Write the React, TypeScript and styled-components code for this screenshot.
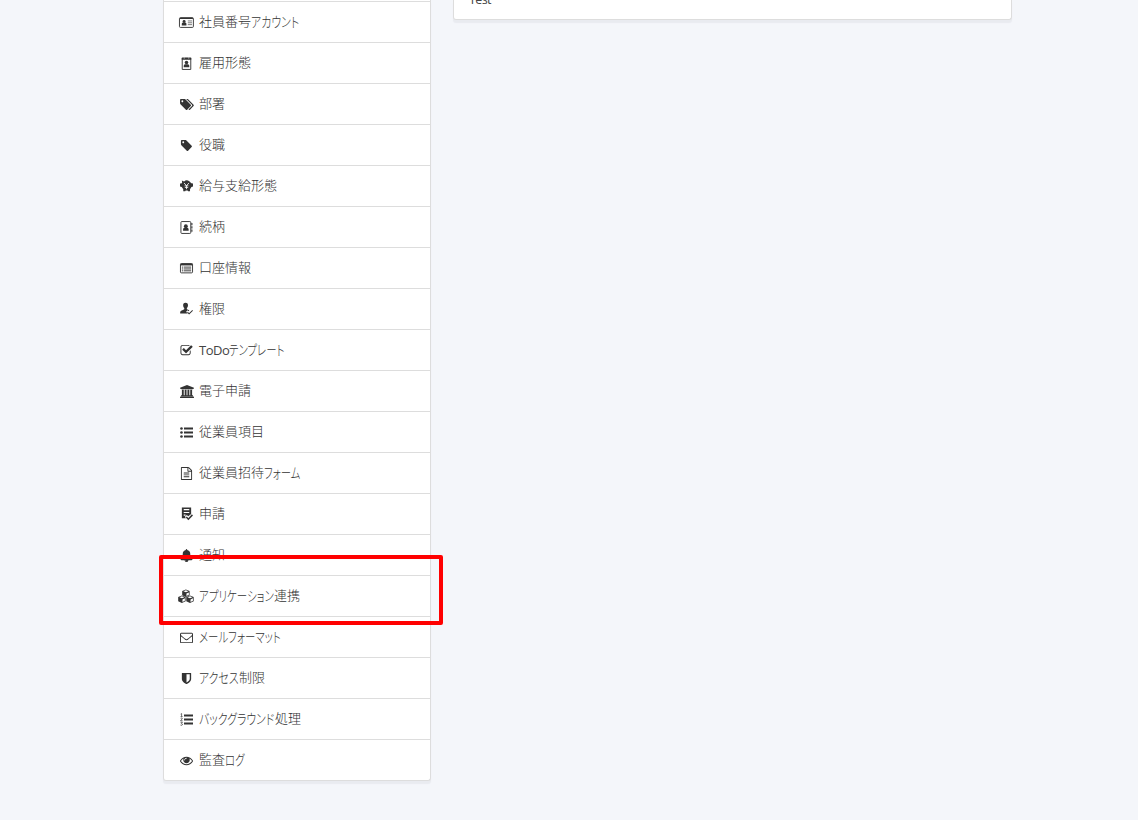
import React from "react";
import styled, { createGlobalStyle } from "styled-components";

const GlobalStyle = createGlobalStyle`
  * { box-sizing: border-box; }
  html, body { margin: 0; background: #f4f6fa; }
  body {
    height: 820px;
    overflow: hidden;
    color: #333;
    font-family: "Open Sans", "Noto Sans CJK JP", sans-serif;
    font-size: 13px;
  }
`;

const Page = styled.div`
  position: relative;
  display: flex;
  align-items: flex-start;
  gap: 22px;
  height: 820px;
  padding-left: 163px;
  overflow: hidden;
`;

const Menu = styled.nav`
  width: 268px;
  padding-top: 1px;
  background: #fff;
  border: 1px solid #ddd;
  border-top: 0;
  border-radius: 0 0 3px 3px;
  box-shadow: 0 3px 1px #e9ebf0;
`;

const MenuItem = styled.a`
  display: flex;
  align-items: center;
  height: 41px;
  padding-left: 14px;
  border-top: 1px solid #ddd;
`;

const IconSlot = styled.span`
  display: flex;
  flex: none;
  justify-content: center;
  width: 17.4px;
  margin-right: 3.6px;
  color: #333;

  svg { display: block; flex: none; overflow: visible; }
`;

const Label = styled.span`
  display: flex;
  padding-bottom: 2px;
  line-height: 20px;
  font-weight: 300;
  white-space: nowrap;
`;

const Latin = styled.span`
  padding-top: 1px;
  color: #444;
  font-weight: 400;
  letter-spacing: -0.5px;
`;

const Kana = styled.span<{ $width: number; $scale: number }>`
  display: block;
  width: ${(p) => p.$width}px;
  font-size: 14px;
  font-feature-settings: "palt";
  transform: translateY(0.5px) scaleX(${(p) => p.$scale});
  transform-origin: left;
`;

const Card = styled.section`
  display: flex;
  align-items: flex-end;
  width: 559px;
  height: 20px;
  padding: 0 15px 9px;
  background: #fff;
  border: 1px solid #ddd;
  border-top: 0;
  border-radius: 0 0 3px 3px;
  box-shadow: 0 3px 1px #e9ebf0;
  color: #444;
  font-size: 12.5px;
  line-height: 20px;
  letter-spacing: -0.6px;
`;

const Highlight = styled.div`
  position: absolute;
  left: 159px;
  top: 555px;
  width: 284px;
  height: 70px;
  border: 4px solid #f00;
  border-radius: 2px;
`;

const Glyph = ({ d, box = "0 0 1792 1792", w = 13 }: { d: string; box?: string; w?: number }) => (
  <svg width={w} height={13} viewBox={box} fill="currentColor"><path d={d} /></svg>
);

const Drawn = ({ children, w = 14 }: { children: React.ReactNode; w?: number }) => (
  <svg width={(w * 13) / 14} height={13} viewBox={`0 0 ${w} 14`} fill="currentColor">{children}</svg>
);

const line = { fill: "none", stroke: "currentColor" };

const IdCard = () => (
  <Drawn w={16}>
    <rect x=".5" y="1.8" width="15" height="10.5" rx="1" {...line} />
    <path d="M1 1.8h14v1.4H1zM3 10.1V8.3q0-1.1 1.2-1.3h2.6Q8 7.2 8 8.3v1.8z" />
    <circle cx="5.5" cy="5.9" r="1.6" />
    <path d="M9.5 5.3H14M9.5 7.3H14M9.5 9.3H14" {...line} strokeWidth=".7" />
  </Drawn>
);
const Badge = () => (
  <Drawn>
    <path d="M2.4 1.2h9.2v12.2H2.4z" {...line} />
    <path d="M1.9.7h2v1.2h1.4V.7h3.4v1.2h1.4V.7h2v2.2H1.9zM4 11V9.4q0-1.4 1.5-1.7h3q1.5.3 1.5 1.7V11z" />
    <circle cx="7" cy="6" r="1.9" />
  </Drawn>
);
const Piggy = () => (
  <Drawn>
    <path d="M2.3 2.6 2 .5l2.4 1Q7-.6 10 1.3l2.2 2.3 1.8.3v3l-1.7.6-1.5 2.4v2.2H8.7l-.5-.8H6.1l-.5.8H3.5V9.9L1.9 7.5 0 7V3.9l1.5-.2z" />
    <path d="m4.4 3.2 2.6 3 2.6-3M7 6.2v3.7M5 6.3h4M5.2 8h3.6" fill="none" stroke="#fff" strokeWidth=".9" />
  </Drawn>
);
const AddressBook = () => (
  <Drawn>
    <rect x="1" y=".6" width="10.6" height="12.8" rx="1" {...line} />
    <path d="M12.2 2.2h1.2v2.3h-1.2zM12.2 5.7h1.2V8h-1.2zM12.2 9.2h1.2v2.3h-1.2zM3.3 10.6V9.1q0-1.5 1.4-1.7h3.2q1.4.2 1.4 1.7v1.5z" />
    <circle cx="6.3" cy="5.6" r="2.1" />
  </Drawn>
);
const ListCard = () => (
  <Drawn>
    <rect x=".5" y="1.7" width="13" height="10" rx="1" {...line} />
    <path d="M.5 1.7h13v2H.5z" />
    <path d="M2 5.5h1.3M4 5.5h8M2 7.5h1.3M4 7.5h8M2 9.5h1.3M4 9.5h8" {...line} />
  </Drawn>
);
const UserCheck = () => (
  <Drawn>
    <path d="M6-.4c2 0 2.8 1.3 2.6 3.2-.1 1.3-.5 2.1-1.2 2.7v1.3l2.7 1-1 1.1-1-1-1.5 1.5 1.7 1.9H.2V9.8C.2 8.3 2.8 8 4.6 6.8V5.5C3.8 4.9 3.5 4.1 3.4 2.8 3.2.9 4-.4 6-.4z" />
    <path d="m8 9.9 1.8 1.8 3.8-3.7" {...line} strokeWidth="1.1" />
  </Drawn>
);
const FormCheck = () => (
  <Drawn>
    <path fillRule="evenodd" d="M2-.6h10v7L8.9 9 7.3 7.6 5.2 9.5l1.2 1.6H2zM4 1.2v1.3h6V1.2zM4 4.3v1.2h6V4.3zM4 7.1v1.2h2V7.1z" />
    <path d="m6.8 9.6 2.2 2.4 4.4-4.6" {...line} strokeWidth="1.6" />
  </Drawn>
);
const BulletList = () => (
  <Drawn>
    <circle cx="1.6" cy="2.7" r="1.4" /><circle cx="1.6" cy="7" r="1.4" /><circle cx="1.6" cy="11.3" r="1.4" />
    <path d="M4.3 1.7H14v2H4.3zM4.3 6H14v2H4.3zM4.3 10.3H14v2H4.3z" />
  </Drawn>
);
const NumberedList = () => (
  <Drawn>
    <path d="M4.3 1.7H14v2H4.3zM4.3 6H14v2H4.3zM4.3 10.3H14v2H4.3z" />
    <path d="m.7 1.2 1-.6v3.2M.6 3.9h2.2M.7 5.7q1.8-.8 1.8.4L.6 8.4h2.2M.6 10h2L1.5 11.3q2 .5.8 1.7-.9.6-1.8 0" {...line} strokeWidth=".75" />
  </Drawn>
);
const cube = "M0-4 4-2.3v4.4L0 4.1-4 2.1v-4.4zM-2.7-2.1 0-1l2.7-1.1L0-3.2zM.6 2.9 3.2 1.7v-2.6L.6.2z";
const Cubes = () => (
  <Drawn w={18}>
    <path fillRule="evenodd" transform="translate(8.5 3.5)" d={cube} />
    <path fillRule="evenodd" transform="translate(4.2 9.9)" d={cube} />
    <path fillRule="evenodd" transform="translate(12.9 9.9)" d={cube} />
  </Drawn>
);

const tag = "M576 448q0-53-37.5-90.5t-90.5-37.5-90.5 37.5-37.5 90.5 37.5 90.5 90.5 37.5 90.5-37.5 37.5-90.5zm1067 576q0 53-37 90l-491 492q-39 37-91 37-53 0-90-37l-715-716q-38-37-64.5-101t-26.5-117v-416q0-52 38-90t90-38h416q53 0 117 26.5t102 64.5l715 714q37 39 37 91z";
const tags = "M448 448q0-53-37.5-90.5t-90.5-37.5-90.5 37.5-37.5 90.5 37.5 90.5 90.5 37.5 90.5-37.5 37.5-90.5zm1067 576q0 53-37 90l-491 492q-39 37-91 37-53 0-90-37l-715-716q-38-37-64.5-101t-26.5-117v-416q0-52 38-90t90-38h416q53 0 117 26.5t102 64.5l715 714q37 39 37 91zm384 0q0 53-37 90l-491 492q-39 37-91 37-36 0-59-14t-53-45l470-470q37-37 37-90 0-52-37-91l-715-714q-38-38-102-64.5t-117-26.5h224q53 0 117 26.5t102 64.5l715 714q37 39 37 91z";
const check = "M1472 930v318q0 119-84.5 203.5t-203.5 84.5h-832q-119 0-203.5-84.5t-84.5-203.5v-832q0-119 84.5-203.5t203.5-84.5h832q63 0 117 25 15 7 18 23 3 17-9 29l-49 49q-10 10-23 10-3 0-9-2-23-6-45-6h-832q-66 0-113 47t-47 113v832q0 66 47 113t113 47h832q66 0 113-47t47-113v-254q0-13 9-22l64-64q10-10 23-10 6 0 12 3 20 8 20 29zm231-489l-814 814q-24 24-57 24t-57-24l-430-430q-24-24-24-57t24-57l110-110q24-24 57-24t57 24l263 263 647-647q24-24 57-24t57 24l110 110q24 24 24 57t-24 57z";
const bank = "M896 0l960 384v128h-128q0 26-20.5 45t-48.5 19h-1526q-28 0-48.5-19t-20.5-45h-128v-128zm-704 640h256v768h128v-768h256v768h128v-768h256v768h128v-768h256v768h59q28 0 48.5 19t20.5 45v64h-1664v-64q0-26 20.5-45t48.5-19h59v-768zm1595 960q28 0 48.5 19t20.5 45v128h-1920v-128q0-26 20.5-45t48.5-19h1782z";
const file = "M1596 380q28 28 48 76t20 88v1152q0 40-28 68t-68 28h-1344q-40 0-68-28t-28-68v-1600q0-40 28-68t68-28h896q40 0 88 20t76 48zm-444-244v376h376q-10-29-22-41l-313-313q-12-12-41-22zm384 1528v-1024h-416q-40 0-68-28t-28-68v-416h-768v1536h1280zm-1024-864q0-14 9-23t23-9h704q14 0 23 9t9 23v64q0 14-9 23t-23 9h-704q-14 0-23-9t-9-23v-64zm736 224q14 0 23 9t9 23v64q0 14-9 23t-23 9h-704q-14 0-23-9t-9-23v-64q0-14 9-23t23-9h704zm0 256q14 0 23 9t9 23v64q0 14-9 23t-23 9h-704q-14 0-23-9t-9-23v-64q0-14 9-23t23-9h704z";
const bell = "M912 1696q0-16-16-16-59 0-101.5-42.5t-42.5-101.5q0-16-16-16t-16 16q0 73 51.5 124.5t124.5 51.5q16 0 16-16zm816-288q0 52-38 90t-90 38h-448q0 106-75 181t-181 75-181-75-75-181h-448q-52 0-90-38t-38-90q50-42 91-88t85-119.5 74.5-158.5 50-206 19.5-260q0-152 117-282.5t307-158.5q-8-19-8-39 0-40 28-68t68-28 68 28 28 68q0 20-8 39 190 28 307 158.5t117 282.5q0 139 19.5 260t50 206 74.5 158.5 85 119.5 91 88z";
const envelope = "M1664 1504v-768q-32 36-69 66-268 206-426 338-51 43-83 67t-86.5 48.5-102.5 24.5h-2q-48 0-102.5-24.5t-86.5-48.5-83-67q-158-132-426-338-37-30-69-66v768q0 13 9.5 22.5t22.5 9.5h1472q13 0 22.5-9.5t9.5-22.5zm0-1051v-24.5l-.5-13-3-12.5-5.5-9-9-7.5-14-2.5h-1472q-13 0-22.5 9.5t-9.5 22.5q0 168 147 284 193 152 401 317 6 5 35 29.5t46 37.5 44.5 31.5 50.5 27.5 43 9h2q20 0 43-9t50.5-27.5 44.5-31.5 46-37.5 35-29.5q208-165 401-317 54-43 100.5-115.5t46.5-131.5zm128-37v1088q0 66-47 113t-113 47h-1472q-66 0-113-47t-47-113v-1088q0-66 47-113t113-47h1472q66 0 113 47t47 113z";
const shield = "M1344 960v-640h-448v1137q119-63 213-137 235-184 235-360zm192-768v768q0 86-33.5 170.5t-83 150-118 127.5-126.5 103-121 77.5-89.5 49.5-42.5 20q-12 6-26 6t-26-6q-16-7-42.5-20t-89.5-49.5-121-77.5-126.5-103-118-127.5-83-150-33.5-170.5v-768q0-26 19-45t45-19h1152q26 0 45 19t19 45z";
const eye = "M1664 960q-152-236-381-353 61 104 61 225 0 185-131.5 316.5t-316.5 131.5-316.5-131.5-131.5-316.5q0-121 61-225-229 117-381 353 133 205 333.5 326.5t434.5 121.5 434.5-121.5 333.5-326.5zm-720-384q0-20-14-34t-34-14q-125 0-214.5 89.5t-89.5 214.5q0 20 14 34t34 14 34-14 14-34q0-86 61-147t147-61q20 0 34-14t14-34zm848 384q0 34-20 69-140 230-376.5 368.5t-499.5 138.5-499.5-139-376.5-368q-20-35-20-69t20-69q140-229 376.5-368t499.5-139 499.5 139 376.5 368q20 35 20 69z";

type KanaRun = { kana: string; width: number; scale: number };
type Part = string | KanaRun | { latin: string };

// Kana runs are set narrower than kanji.
const kana = (text: string, width: number, scale: number): KanaRun => ({ kana: text, width, scale });

const items: { icon: React.ReactNode; label: Part[] }[] = [
  { icon: <IdCard />, label: ["社員番号", kana("アカウント", 48, 0.78)] },
  { icon: <Badge />, label: ["雇用形態"] },
  { icon: <Glyph d={tags} box="0 0 1920 1792" w={14} />, label: ["部署"] },
  { icon: <Glyph d={tag} />, label: ["役職"] },
  { icon: <Piggy />, label: ["給与支給形態"] },
  { icon: <AddressBook />, label: ["続柄"] },
  { icon: <ListCard />, label: ["口座情報"] },
  { icon: <UserCheck />, label: ["権限"] },
  { icon: <Glyph d={check} />, label: [{ latin: "ToDo" }, kana("テンプレート", 57, 0.745)] },
  { icon: <Glyph d={bank} box="-64 0 1920 1792" w={14} />, label: ["電子申請"] },
  { icon: <BulletList />, label: ["従業員項目"] },
  { icon: <Glyph d={file} />, label: ["従業員招待", kana("フォーム", 37, 0.74)] },
  { icon: <FormCheck />, label: ["申請"] },
  { icon: <Glyph d={bell} />, label: ["通知"] },
  { icon: <Cubes />, label: [kana("アプリケーション", 75, 0.75), "連携"] },
  { icon: <Glyph d={envelope} />, label: [kana("メールフォーマット", 83, 0.745)] },
  { icon: <Glyph d={shield} />, label: [kana("アクセス", 40, 0.78), "制限"] },
  { icon: <NumberedList />, label: [kana("バックグラウンド", 76, 0.775), "処理"] },
  { icon: <Glyph d={eye} />, label: ["監査", kana("ログ", 20, 0.745)] },
];

const LabelPart = ({ part }: { part: Part }) => {
  if (typeof part === "string") return <span>{part}</span>;
  if ("latin" in part) return <Latin>{part.latin}</Latin>;
  return <Kana $width={part.width} $scale={part.scale}>{part.kana}</Kana>;
};

export default function App() {
  return (
    <>
      <GlobalStyle />
      <Page>
        <Menu>
          {items.map((item, i) => (
            <MenuItem key={i}>
              <IconSlot>{item.icon}</IconSlot>
              <Label>
                {item.label.map((part, j) => <LabelPart key={j} part={part} />)}
              </Label>
            </MenuItem>
          ))}
        </Menu>
        <Card>Test</Card>
        <Highlight />
      </Page>
    </>
  );
}
